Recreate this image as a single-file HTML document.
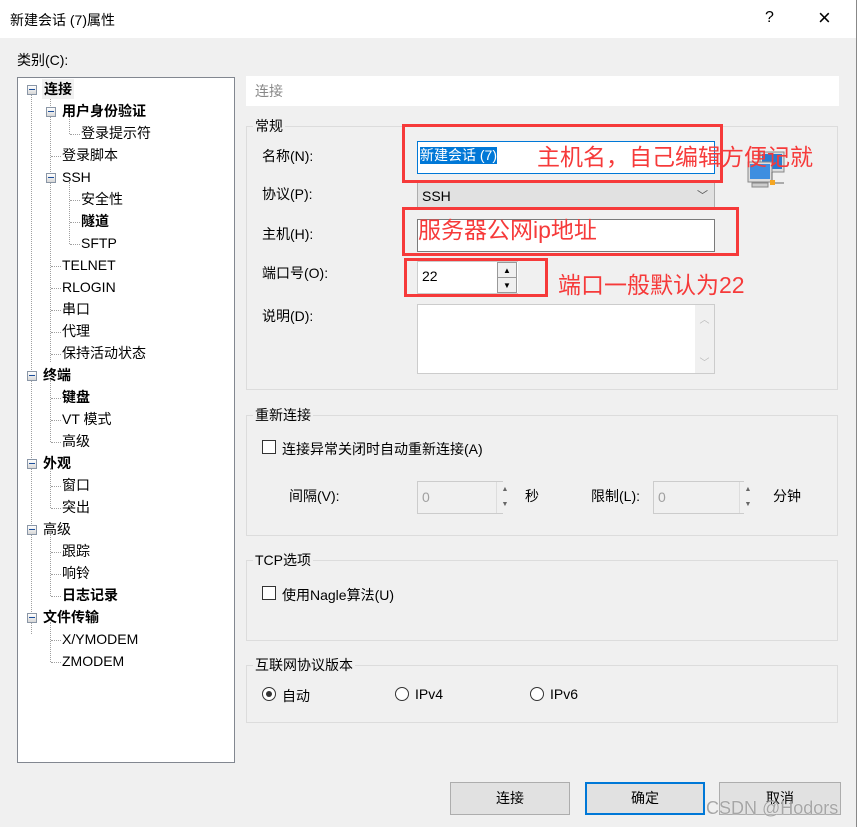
<!DOCTYPE html>
<html><head><meta charset="utf-8"><style>
*{margin:0;padding:0;box-sizing:border-box}
body{width:857px;height:827px;background:#f0f0f0;font-family:"Liberation Sans","Noto Sans CJK SC",sans-serif;font-size:14px;color:#000;position:relative;overflow:hidden}
.a{position:absolute;white-space:nowrap}
.title{left:0;top:0;width:857px;height:38px;background:#fff}
.tree{left:17px;top:77px;width:218px;height:686px;background:#fff;border:1px solid #828790}
.ti{position:absolute;height:20px;line-height:20px;font-size:14px}
.b{font-weight:bold}
.exp{position:absolute;width:10px;height:10px;border:1px solid #8a96a6;background:linear-gradient(#fff,#d8d8d8)}
.exp:after{content:"";position:absolute;left:1px;top:3px;width:6px;height:1px;background:#1c4f9c}
.vl{position:absolute;border-left:1px dotted #a0a0a0;width:0}
.hl{position:absolute;border-top:1px dotted #a0a0a0;height:0}
.gb{position:absolute;border:1px solid #dcdcdc}
.gl{position:absolute;background:#f0f0f0;padding:0 2px;font-size:14px;line-height:16px}
.inp{position:absolute;background:#fff;border:1px solid #7a7a7a}
.dis{position:absolute;background:#f0f0f0;border:1px solid #cccccc;color:#a0a0a0;padding-left:4px;line-height:30px}
.red{position:absolute;border:3px solid #f63a3a}
.rt{position:absolute;color:#f63a3a;font-size:23px;white-space:nowrap}
.btn{position:absolute;background:#e1e1e1;border:1px solid #adadad;text-align:center;line-height:30px;height:33px}
.cb{position:absolute;width:14px;height:14px;border:1px solid #333;background:#fff}
.rb{position:absolute;width:14px;height:14px;border:1px solid #333;border-radius:50%;background:#fff}
.spin{position:absolute;width:17px;border-left:1px solid #ddd;background:#f0f0f0}
</style></head><body>
<div class="a title"></div>
<div class="a" style="left:10px;top:10px;font-size:14px">新建会话 (7)属性</div>
<div class="a" style="left:765px;top:9px;font-size:16px">?</div>
<div class="a" style="left:818px;top:5px;font-size:22px;font-weight:200">×</div>
<div style="position:absolute;right:0;top:0;width:1px;height:827px;background:#888"></div>

<div class="a" style="left:17px;top:50px">类别(C):</div>
<div class="a tree">
<div class="vl" style="left:13px;top:16px;height:540px"></div>
<div class="vl" style="left:32px;top:16px;height:268px"></div>
<div class="vl" style="left:51px;top:38px;height:18px"></div>
<div class="vl" style="left:51px;top:104px;height:62px"></div>
<div class="vl" style="left:32px;top:302px;height:62px"></div>
<div class="vl" style="left:32px;top:390px;height:40px"></div>
<div class="vl" style="left:32px;top:456px;height:62px"></div>
<div class="vl" style="left:32px;top:544px;height:40px"></div>
<div class="exp" style="left:9px;top:7px"></div>
<div class="ti b" style="left:24px;top:1px;background:#f0f0f0;padding:0 2px">连接</div>
<div class="exp" style="left:28px;top:29px"></div><div class="ti b" style="left:44px;top:23px">用户身份验证</div>
<div class="hl" style="left:52px;top:56px;width:10px"></div><div class="ti" style="left:63px;top:45px">登录提示符</div>
<div class="hl" style="left:33px;top:78px;width:10px"></div><div class="ti" style="left:44px;top:67px">登录脚本</div>
<div class="exp" style="left:28px;top:95px"></div><div class="ti" style="left:44px;top:89px">SSH</div>
<div class="hl" style="left:52px;top:122px;width:10px"></div><div class="ti" style="left:63px;top:111px">安全性</div>
<div class="hl" style="left:52px;top:144px;width:10px"></div><div class="ti b" style="left:63px;top:133px">隧道</div>
<div class="hl" style="left:52px;top:166px;width:10px"></div><div class="ti" style="left:63px;top:155px">SFTP</div>
<div class="hl" style="left:33px;top:188px;width:10px"></div><div class="ti" style="left:44px;top:177px">TELNET</div>
<div class="hl" style="left:33px;top:210px;width:10px"></div><div class="ti" style="left:44px;top:199px">RLOGIN</div>
<div class="hl" style="left:33px;top:232px;width:10px"></div><div class="ti" style="left:44px;top:221px">串口</div>
<div class="hl" style="left:33px;top:254px;width:10px"></div><div class="ti" style="left:44px;top:243px">代理</div>
<div class="hl" style="left:33px;top:276px;width:10px"></div><div class="ti" style="left:44px;top:265px">保持活动状态</div>
<div class="exp" style="left:9px;top:293px"></div><div class="ti b" style="left:25px;top:287px">终端</div>
<div class="hl" style="left:33px;top:320px;width:10px"></div><div class="ti b" style="left:44px;top:309px">键盘</div>
<div class="hl" style="left:33px;top:342px;width:10px"></div><div class="ti" style="left:44px;top:331px">VT 模式</div>
<div class="hl" style="left:33px;top:364px;width:10px"></div><div class="ti" style="left:44px;top:353px">高级</div>
<div class="exp" style="left:9px;top:381px"></div><div class="ti b" style="left:25px;top:375px">外观</div>
<div class="hl" style="left:33px;top:408px;width:10px"></div><div class="ti" style="left:44px;top:397px">窗口</div>
<div class="hl" style="left:33px;top:430px;width:10px"></div><div class="ti" style="left:44px;top:419px">突出</div>
<div class="exp" style="left:9px;top:447px"></div><div class="ti" style="left:25px;top:441px">高级</div>
<div class="hl" style="left:33px;top:474px;width:10px"></div><div class="ti" style="left:44px;top:463px">跟踪</div>
<div class="hl" style="left:33px;top:496px;width:10px"></div><div class="ti" style="left:44px;top:485px">响铃</div>
<div class="hl" style="left:33px;top:518px;width:10px"></div><div class="ti b" style="left:44px;top:507px">日志记录</div>
<div class="exp" style="left:9px;top:535px"></div><div class="ti b" style="left:25px;top:529px">文件传输</div>
<div class="hl" style="left:33px;top:562px;width:10px"></div><div class="ti" style="left:44px;top:551px">X/YMODEM</div>
<div class="hl" style="left:33px;top:584px;width:10px"></div><div class="ti" style="left:44px;top:573px">ZMODEM</div>
</div>

<div class="a" style="left:246px;top:76px;width:593px;height:30px;background:#fff"></div>
<div class="a" style="left:255px;top:81px;color:#888">连接</div>

<div class="gb" style="left:246px;top:126px;width:592px;height:264px"></div>
<div class="gl" style="left:253px;top:118px">常规</div>
<div class="a" style="left:262px;top:146px">名称(N):</div>
<div class="a" style="left:262px;top:184px">协议(P):</div>
<div class="a" style="left:262px;top:224px">主机(H):</div>
<div class="a" style="left:262px;top:263px">端口号(O):</div>
<div class="a" style="left:262px;top:306px">说明(D):</div>
<div class="inp" style="left:417px;top:141px;width:298px;height:33px;border-color:#0078d7"><span style="position:absolute;left:2px;top:5px;background:#0078d7;color:#fff;line-height:17px">新建会话 (7)</span></div>
<div class="a" style="left:417px;top:182px;width:298px;height:28px;background:#e1e1e1;border:1px solid #adadad;padding-left:4px;line-height:26px">SSH<span style="position:absolute;right:6px;top:0;font-size:11px;color:#555">﹀</span></div>
<div class="inp" style="left:417px;top:219px;width:298px;height:33px"></div>
<div class="inp" style="left:417px;top:261px;width:101px;height:33px;border-color:#ccc;border-right:none"><span style="position:absolute;left:4px;top:6px">22</span></div>
<div class="a" style="left:497px;top:262px;width:20px;height:31px;background:#f0f0f0;border:1px solid #999"><div style="height:15px;border-bottom:1px solid #999;font-size:8px;text-align:center;line-height:15px">▲</div><div style="font-size:8px;text-align:center;line-height:15px">▼</div></div>
<div class="inp" style="left:417px;top:304px;width:298px;height:70px;border-color:#ccc"><div style="position:absolute;right:0;top:0;width:19px;height:68px;background:#f0f0f0;color:#bbb;font-size:10px;text-align:center"><div style="margin-top:6px">︿</div><div style="margin-top:28px">﹀</div></div></div>
<svg class="a" style="left:746px;top:150px" width="42" height="42" viewBox="0 0 42 42"><rect x="14" y="2" width="24" height="20" fill="#ddd" stroke="#888"/><rect x="16" y="4" width="20" height="15" fill="#2a7cd0"/><rect x="2" y="12" width="24" height="20" fill="#ddd" stroke="#888"/><rect x="4" y="14" width="20" height="15" fill="#3d8ee0"/><rect x="6" y="33" width="16" height="4" fill="#ccc" stroke="#888"/><rect x="24" y="30" width="5" height="5" fill="#f5a623"/><path d="M26 30 V22 M29 33 H38" stroke="#666"/></svg>

<div class="red" style="left:402px;top:124px;width:321px;height:59px"></div>
<div class="rt" style="left:537px;top:138px">主机名，自己编辑方便记就</div>
<div class="red" style="left:402px;top:207px;width:337px;height:49px"></div>
<div class="rt" style="left:418px;top:211px">服务器公网ip地址</div>
<div class="red" style="left:404px;top:258px;width:144px;height:39px"></div>
<div class="rt" style="left:558px;top:266px">端口一般默认为22</div>

<div class="gb" style="left:246px;top:415px;width:592px;height:121px"></div>
<div class="gl" style="left:253px;top:407px">重新连接</div>
<div class="cb" style="left:262px;top:440px"></div>
<div class="a" style="left:282px;top:439px">连接异常关闭时自动重新连接(A)</div>
<div class="a" style="left:289px;top:486px">间隔(V):</div>
<div class="dis" style="left:417px;top:481px;width:86px;height:33px">0</div>
<div class="spin" style="left:496px;top:482px;height:31px;font-size:7px;color:#666;text-align:center;line-height:15px">▲<br>▼</div>
<div class="a" style="left:525px;top:486px">秒</div>
<div class="a" style="left:591px;top:486px">限制(L):</div>
<div class="dis" style="left:653px;top:481px;width:91px;height:33px">0</div>
<div class="spin" style="left:739px;top:482px;height:31px;font-size:7px;color:#666;text-align:center;line-height:15px">▲<br>▼</div>
<div class="a" style="left:773px;top:486px">分钟</div>

<div class="gb" style="left:246px;top:560px;width:592px;height:81px"></div>
<div class="gl" style="left:253px;top:552px">TCP选项</div>
<div class="cb" style="left:262px;top:586px"></div>
<div class="a" style="left:282px;top:585px">使用Nagle算法(U)</div>

<div class="gb" style="left:246px;top:665px;width:592px;height:58px"></div>
<div class="gl" style="left:253px;top:657px">互联网协议版本</div>
<div class="rb" style="left:262px;top:687px"><div style="position:absolute;left:3px;top:3px;width:6px;height:6px;border-radius:50%;background:#333"></div></div>
<div class="a" style="left:282px;top:686px">自动</div>
<div class="rb" style="left:395px;top:687px"></div>
<div class="a" style="left:415px;top:686px">IPv4</div>
<div class="rb" style="left:530px;top:687px"></div>
<div class="a" style="left:550px;top:686px">IPv6</div>

<div class="btn" style="left:450px;top:782px;width:120px">连接</div>
<div class="btn" style="left:585px;top:782px;width:120px;border:2px solid #0078d7;line-height:29px">确定</div>
<div class="btn" style="left:719px;top:782px;width:122px">取消</div>
<div class="a" style="left:706px;top:798px;font-size:18px;color:rgba(150,150,150,0.85);text-shadow:0 0 1px #fff">CSDN @Hodors</div>
</body></html>
